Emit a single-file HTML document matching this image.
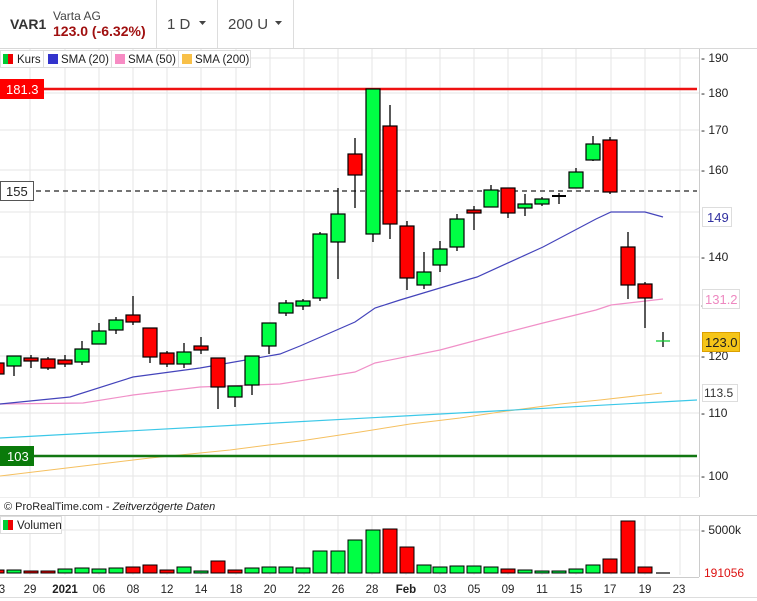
<!DOCTYPE html>
<html><head><meta charset="utf-8"><style>
body{margin:0;width:757px;height:601px;overflow:hidden;background:#fff;font-family:"Liberation Sans",sans-serif;}
svg{position:absolute;left:0;top:0}
</style></head><body>
<svg width="757" height="601" viewBox="0 0 757 601" font-family="Liberation Sans, sans-serif">
<rect x="0" y="0" width="757" height="47" fill="#fff"/>
<line x1="0" y1="48.5" x2="757" y2="48.5" stroke="#d8d8d8"/>
<line x1="156.5" y1="0" x2="156.5" y2="48" stroke="#ddd"/>
<line x1="217.5" y1="0" x2="217.5" y2="48" stroke="#ddd"/>
<line x1="293.5" y1="0" x2="293.5" y2="48" stroke="#ddd"/>
<text x="10" y="29" font-size="14" font-weight="bold" fill="#333">VAR1</text>
<text x="53" y="20" font-size="12" fill="#444">Varta AG</text>
<text x="53" y="36" font-size="14" font-weight="bold" fill="#a01010">123.0 (-6.32%)</text>
<text x="167" y="29" font-size="15" fill="#444">1 D</text>
<path d="M199 21h7l-3.5 4z" fill="#444"/>
<text x="228" y="29" font-size="15" fill="#444">200 U</text>
<path d="M275 21h7l-3.5 4z" fill="#444"/>

<g stroke="#e6e6e6" stroke-width="1">
<line x1="30" y1="49" x2="30" y2="497"/><line x1="65" y1="49" x2="65" y2="497"/><line x1="99" y1="49" x2="99" y2="497"/><line x1="133" y1="49" x2="133" y2="497"/><line x1="167" y1="49" x2="167" y2="497"/><line x1="201" y1="49" x2="201" y2="497"/><line x1="236" y1="49" x2="236" y2="497"/><line x1="270" y1="49" x2="270" y2="497"/><line x1="304" y1="49" x2="304" y2="497"/><line x1="338" y1="49" x2="338" y2="497"/><line x1="372" y1="49" x2="372" y2="497"/><line x1="406" y1="49" x2="406" y2="497"/><line x1="440" y1="49" x2="440" y2="497"/><line x1="474" y1="49" x2="474" y2="497"/><line x1="508" y1="49" x2="508" y2="497"/><line x1="542" y1="49" x2="542" y2="497"/><line x1="576" y1="49" x2="576" y2="497"/><line x1="611" y1="49" x2="611" y2="497"/><line x1="645" y1="49" x2="645" y2="497"/><line x1="680" y1="49" x2="680" y2="497"/>
<line x1="0" y1="58" x2="699" y2="58"/><line x1="0" y1="93" x2="699" y2="93"/><line x1="0" y1="130" x2="699" y2="130"/><line x1="0" y1="170" x2="699" y2="170"/><line x1="0" y1="212" x2="699" y2="212"/><line x1="0" y1="257" x2="699" y2="257"/><line x1="0" y1="305" x2="699" y2="305"/><line x1="0" y1="356" x2="699" y2="356"/><line x1="0" y1="413" x2="699" y2="413"/><line x1="0" y1="476" x2="699" y2="476"/>
<line x1="30" y1="516" x2="30" y2="575"/><line x1="65" y1="516" x2="65" y2="575"/><line x1="99" y1="516" x2="99" y2="575"/><line x1="133" y1="516" x2="133" y2="575"/><line x1="167" y1="516" x2="167" y2="575"/><line x1="201" y1="516" x2="201" y2="575"/><line x1="236" y1="516" x2="236" y2="575"/><line x1="270" y1="516" x2="270" y2="575"/><line x1="304" y1="516" x2="304" y2="575"/><line x1="338" y1="516" x2="338" y2="575"/><line x1="372" y1="516" x2="372" y2="575"/><line x1="406" y1="516" x2="406" y2="575"/><line x1="440" y1="516" x2="440" y2="575"/><line x1="474" y1="516" x2="474" y2="575"/><line x1="508" y1="516" x2="508" y2="575"/><line x1="542" y1="516" x2="542" y2="575"/><line x1="576" y1="516" x2="576" y2="575"/><line x1="611" y1="516" x2="611" y2="575"/><line x1="645" y1="516" x2="645" y2="575"/><line x1="680" y1="516" x2="680" y2="575"/>
<line x1="0" y1="530" x2="699" y2="530"/>
</g>

<polyline fill="none" stroke="#f5c060" stroke-width="1" points="0,476 75,467 150,458 230,450 300,441 360,432 410,424 460,418 500,412 560,404 600,400 662,393"/>
<polyline fill="none" stroke="#3cc8e8" stroke-width="1.2" points="0,438 697,400"/>
<polyline fill="none" stroke="#f090c8" stroke-width="1.2" points="0,404 83,403 133,395 200,387 280,384 355,372 375,363 440,350 500,334 543,323 596,310 611,305 663,299"/>
<polyline fill="none" stroke="#4444bb" stroke-width="1.2" points="0,404 70,397 133,377 200,368 280,354 300,346 355,322 375,308 400,300 470,279 477,277 543,247 596,219 611,212 645,212 663,217"/>

<line x1="0" y1="89" x2="697" y2="89" stroke="#ee1111" stroke-width="2.5"/>
<line x1="0" y1="191" x2="697" y2="191" stroke="#222" stroke-width="1.2" stroke-dasharray="5,4"/>
<line x1="0" y1="456" x2="697" y2="456" stroke="#117711" stroke-width="2.5"/>

<g stroke="#000" stroke-width="1.3">
<line x1="14" y1="356" x2="14" y2="376"/><line x1="31" y1="355" x2="31" y2="368"/><line x1="48" y1="357" x2="48" y2="370"/><line x1="65" y1="355" x2="65" y2="367"/><line x1="82" y1="341" x2="82" y2="365"/><line x1="99" y1="323" x2="99" y2="344"/><line x1="116" y1="317" x2="116" y2="334"/><line x1="133" y1="296" x2="133" y2="325"/><line x1="150" y1="328" x2="150" y2="363"/><line x1="167" y1="351" x2="167" y2="367"/><line x1="184" y1="343" x2="184" y2="368"/><line x1="201" y1="337" x2="201" y2="354"/><line x1="218" y1="358" x2="218" y2="409"/><line x1="235" y1="386" x2="235" y2="407"/><line x1="252" y1="356" x2="252" y2="395"/><line x1="269" y1="323" x2="269" y2="354"/><line x1="286" y1="300" x2="286" y2="316"/><line x1="303" y1="299" x2="303" y2="310"/><line x1="320" y1="232" x2="320" y2="301"/><line x1="338" y1="188" x2="338" y2="279"/><line x1="355" y1="138" x2="355" y2="208"/><line x1="373" y1="89" x2="373" y2="242"/><line x1="390" y1="105" x2="390" y2="239"/><line x1="407" y1="221" x2="407" y2="290"/><line x1="424" y1="252" x2="424" y2="289"/><line x1="440" y1="241" x2="440" y2="272"/><line x1="457" y1="214" x2="457" y2="251"/><line x1="474" y1="206" x2="474" y2="230"/><line x1="491" y1="185" x2="491" y2="207"/><line x1="508" y1="188" x2="508" y2="218"/><line x1="525" y1="194" x2="525" y2="216"/><line x1="542" y1="197" x2="542" y2="206"/><line x1="559" y1="193" x2="559" y2="204"/><line x1="576" y1="168" x2="576" y2="188"/><line x1="593" y1="136" x2="593" y2="161"/><line x1="610" y1="137" x2="610" y2="194"/><line x1="628" y1="232" x2="628" y2="299"/><line x1="645" y1="282" x2="645" y2="328"/><line x1="663" y1="332" x2="663" y2="347"/>
<line x1="552" y1="196" x2="566" y2="196" stroke-width="2"/>
</g>
<line x1="656" y1="341" x2="670" y2="341" stroke="#11cc33" stroke-width="1.3"/>

<g stroke="#000" stroke-width="1.2">
<rect x="-10" y="363" width="14" height="11" fill="#f00"/>
<rect x="7" y="356" width="14" height="10" fill="#0f4"/>
<rect x="24" y="358" width="14" height="3" fill="#e00"/>
<rect x="41" y="359" width="14" height="9" fill="#f00"/>
<rect x="58" y="360" width="14" height="4" fill="#f00"/>
<rect x="75" y="349" width="14" height="13" fill="#0f4"/>
<rect x="92" y="331" width="14" height="13" fill="#0f4"/>
<rect x="109" y="320" width="14" height="10" fill="#0f4"/>
<rect x="126" y="315" width="14" height="7" fill="#f00"/>
<rect x="143" y="328" width="14" height="29" fill="#f00"/>
<rect x="160" y="353" width="14" height="11" fill="#f00"/>
<rect x="177" y="352" width="14" height="12" fill="#0f4"/>
<rect x="194" y="346" width="14" height="4" fill="#f00"/>
<rect x="211" y="358" width="14" height="29" fill="#f00"/>
<rect x="228" y="386" width="14" height="11" fill="#0f4"/>
<rect x="245" y="356" width="14" height="29" fill="#0f4"/>
<rect x="262" y="323" width="14" height="23" fill="#0f4"/>
<rect x="279" y="303" width="14" height="10" fill="#0f4"/>
<rect x="296" y="301" width="14" height="5" fill="#0f4"/>
<rect x="313" y="234" width="14" height="64" fill="#0f4"/>
<rect x="331" y="214" width="14" height="28" fill="#0f4"/>
<rect x="348" y="154" width="14" height="21" fill="#f00"/>
<rect x="366" y="89" width="14" height="145" fill="#0f4"/>
<rect x="383" y="126" width="14" height="98" fill="#f00"/>
<rect x="400" y="226" width="14" height="52" fill="#f00"/>
<rect x="417" y="272" width="14" height="13" fill="#0f4"/>
<rect x="433" y="249" width="14" height="16" fill="#0f4"/>
<rect x="450" y="219" width="14" height="28" fill="#0f4"/>
<rect x="467" y="210" width="14" height="3" fill="#e00"/>
<rect x="484" y="190" width="14" height="17" fill="#0f4"/>
<rect x="501" y="188" width="14" height="25" fill="#f00"/>
<rect x="518" y="204" width="14" height="4" fill="#0f4"/>
<rect x="535" y="199" width="14" height="5" fill="#0f4"/>
<rect x="569" y="172" width="14" height="16" fill="#0f4"/>
<rect x="586" y="144" width="14" height="16" fill="#0f4"/>
<rect x="603" y="140" width="14" height="52" fill="#f00"/>
<rect x="621" y="247" width="14" height="38" fill="#f00"/>
<rect x="638" y="284" width="14" height="14" fill="#f00"/>
</g>

<rect x="699" y="49" width="58" height="448" fill="#fff"/>
<line x1="699.5" y1="49" x2="699.5" y2="497" stroke="#ccc"/>
<g font-size="12" fill="#222">
<text x="701" y="62">- 190</text><text x="701" y="97">- 180</text><text x="701" y="134">- 170</text><text x="701" y="174">- 160</text><text x="701" y="261">- 140</text><text x="701" y="309">- 130</text><text x="701" y="360">- 120</text><text x="701" y="417">- 110</text><text x="701" y="480">- 100</text>
</g>
<rect x="702.5" y="207.5" width="29" height="19" fill="#fff" stroke="#ddd"/>
<text x="707" y="222" font-size="13" fill="#3030a0">149</text>
<rect x="702.5" y="289.5" width="37" height="19" fill="#fff" stroke="#ddd"/>
<text x="705" y="304" font-size="13" fill="#ee88c0">131.2</text>
<rect x="702.5" y="332.5" width="37" height="19" fill="#f5c518" stroke="#dca000"/>
<text x="705" y="347" font-size="13" fill="#222">123.0</text>
<rect x="702.5" y="384.5" width="35" height="17" fill="#fff" stroke="#ddd"/>
<text x="704" y="397" font-size="12" fill="#333">113.5</text>

<rect x="0" y="79" width="44" height="20" fill="#f00"/>
<text x="6" y="94" font-size="13" fill="#fff">181.3</text>
<rect x="0.5" y="181.5" width="33" height="19" fill="#fff" stroke="#555"/>
<text x="6" y="196" font-size="13" fill="#222">155</text>
<rect x="0" y="446" width="34" height="20" fill="#0a7a0a"/>
<text x="7" y="461" font-size="13" fill="#fff">103</text>

<rect x="0.5" y="50.5" width="250" height="17" fill="#fff" stroke="#ddd"/>
<g stroke="#ddd"><line x1="43.5" y1="50" x2="43.5" y2="68"/><line x1="111.5" y1="50" x2="111.5" y2="68"/><line x1="178.5" y1="50" x2="178.5" y2="68"/></g>
<rect x="3" y="54" width="5" height="10" fill="#0c3"/><rect x="8" y="54" width="5" height="10" fill="#e00"/>
<text x="17" y="63" font-size="11.5" fill="#222">Kurs</text>
<rect x="48" y="54" width="10" height="10" fill="#3333cc"/>
<text x="61" y="63" font-size="11.5" fill="#222">SMA (20)</text>
<rect x="115" y="54" width="10" height="10" fill="#f78cc4"/>
<text x="128" y="63" font-size="11.5" fill="#222">SMA (50)</text>
<rect x="182" y="54" width="10" height="10" fill="#f8c048"/>
<text x="195" y="63" font-size="11.5" fill="#222">SMA (200)</text>

<line x1="0" y1="497.5" x2="699" y2="497.5" stroke="#eee"/>
<text x="4" y="510" font-size="11" fill="#222">© ProRealTime.com - <tspan font-style="italic">Zeitverzögerte Daten</tspan></text>
<line x1="0" y1="515.5" x2="757" y2="515.5" stroke="#ccc"/>

<rect x="0.5" y="516.5" width="61" height="17" fill="#fff" stroke="#ddd"/>
<rect x="3" y="520" width="5" height="10" fill="#0c3"/><rect x="8" y="520" width="5" height="10" fill="#e00"/>
<text x="17" y="529" font-size="11.5" fill="#222">Volumen</text>
<g stroke="#000" stroke-width="1">
<rect x="-10" y="570" width="14" height="3" fill="#f00"/>
<rect x="7" y="570" width="14" height="3" fill="#0f4"/>
<rect x="24" y="571" width="14" height="2" fill="#f00"/>
<rect x="41" y="571" width="14" height="2" fill="#f00"/>
<rect x="58" y="569" width="14" height="4" fill="#0f4"/>
<rect x="75" y="568" width="14" height="5" fill="#0f4"/>
<rect x="92" y="569" width="14" height="4" fill="#0f4"/>
<rect x="109" y="568" width="14" height="5" fill="#0f4"/>
<rect x="126" y="567" width="14" height="6" fill="#f00"/>
<rect x="143" y="565" width="14" height="8" fill="#f00"/>
<rect x="160" y="570" width="14" height="3" fill="#f00"/>
<rect x="177" y="567" width="14" height="6" fill="#0f4"/>
<rect x="194" y="571" width="14" height="2" fill="#0f4"/>
<rect x="211" y="561" width="14" height="12" fill="#f00"/>
<rect x="228" y="570" width="14" height="3" fill="#f00"/>
<rect x="245" y="568" width="14" height="5" fill="#0f4"/>
<rect x="262" y="567" width="14" height="6" fill="#0f4"/>
<rect x="279" y="567" width="14" height="6" fill="#0f4"/>
<rect x="296" y="568" width="14" height="5" fill="#0f4"/>
<rect x="313" y="551" width="14" height="22" fill="#0f4"/>
<rect x="331" y="551" width="14" height="22" fill="#0f4"/>
<rect x="348" y="540" width="14" height="33" fill="#0f4"/>
<rect x="366" y="530" width="14" height="43" fill="#0f4"/>
<rect x="383" y="529" width="14" height="44" fill="#f00"/>
<rect x="400" y="547" width="14" height="26" fill="#f00"/>
<rect x="417" y="565" width="14" height="8" fill="#0f4"/>
<rect x="433" y="567" width="14" height="6" fill="#0f4"/>
<rect x="450" y="566" width="14" height="7" fill="#0f4"/>
<rect x="467" y="566" width="14" height="7" fill="#0f4"/>
<rect x="484" y="567" width="14" height="6" fill="#0f4"/>
<rect x="501" y="569" width="14" height="4" fill="#f00"/>
<rect x="518" y="570" width="14" height="3" fill="#0f4"/>
<rect x="535" y="571" width="14" height="2" fill="#0f4"/>
<rect x="552" y="571" width="14" height="2" fill="#0f4"/>
<rect x="569" y="569" width="14" height="4" fill="#0f4"/>
<rect x="586" y="565" width="14" height="8" fill="#0f4"/>
<rect x="603" y="559" width="14" height="14" fill="#f00"/>
<rect x="621" y="521" width="14" height="52" fill="#f00"/>
<rect x="638" y="567" width="14" height="6" fill="#f00"/>
</g>
<line x1="656" y1="573" x2="670" y2="573" stroke="#000" stroke-width="1.2"/>
<line x1="699.5" y1="516" x2="699.5" y2="577" stroke="#ccc"/>
<text x="701" y="534" font-size="12" fill="#222">- 5000k</text>
<text x="704" y="577" font-size="12" fill="#dd1111">191056</text>

<line x1="0" y1="577.5" x2="699" y2="577.5" stroke="#ccc"/>
<g font-size="11.5" fill="#222" text-anchor="middle">
<text x="2" y="593">3</text><text x="30" y="593">29</text><text x="65" y="593" font-weight="bold">2021</text><text x="99" y="593">06</text><text x="133" y="593">08</text><text x="167" y="593">12</text><text x="201" y="593">14</text><text x="236" y="593">18</text><text x="270" y="593">20</text><text x="304" y="593">22</text><text x="338" y="593">26</text><text x="372" y="593">28</text><text x="406" y="593" font-weight="bold">Feb</text><text x="440" y="593">03</text><text x="474" y="593">05</text><text x="508" y="593">09</text><text x="542" y="593">11</text><text x="576" y="593">15</text><text x="610" y="593">17</text><text x="645" y="593">19</text><text x="679" y="593">23</text>
</g>
<line x1="0" y1="597.5" x2="757" y2="597.5" stroke="#ddd"/>
</svg>
</body></html>
